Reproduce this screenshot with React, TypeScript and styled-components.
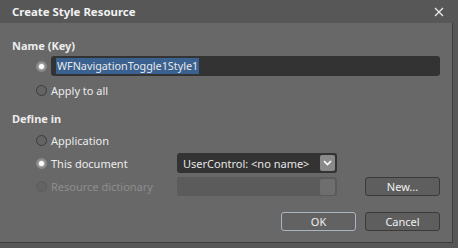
import styled, { createGlobalStyle } from "styled-components";

const GlobalStyle = createGlobalStyle`
  html, body {
    margin: 0;
    padding: 0;
    background: #575757;
  }
  body {
    font-family: "Noto Sans", "Open Sans", sans-serif;
  }
`;

const Window = styled.div`
  width: 458px;
  height: 248px;
  background: #575757;
  display: flex;
  flex-direction: column;
  overflow: hidden;
`;

const TitleBar = styled.div`
  height: 23px;
  display: flex;
  align-items: center;
  justify-content: space-between;
  padding: 0 12px;
  color: #f2f2f2;
  font-size: 11.4px;
  font-weight: 700;
`;

const CloseIcon = styled.svg`
  width: 10px;
  height: 10px;
  margin-right: 2px;
`;

const Body = styled.div`
  width: 453px;
  height: 220px;
  box-sizing: border-box;
  background: #686868;
  border-right: 1px solid #3e3e3e;
  border-bottom: 1px solid #3e3e3e;
  padding: 14px 12px 0 12px;
  display: flex;
  flex-direction: column;
  color: #ececec;
  font-size: 11px;
`;

const GroupLabel = styled.div<{ $top?: number }>`
  font-weight: 700;
  height: 18px;
  line-height: 18px;
  margin-top: ${(p) => p.$top ?? 0}px;
`;

const OptionRow = styled.div<{ $height: number; $top?: number }>`
  display: flex;
  align-items: center;
  height: ${(p) => p.$height}px;
  margin-top: ${(p) => p.$top ?? 0}px;
  padding-left: 24px;
`;

const Radio = styled.span<{ $checked?: boolean; $disabled?: boolean }>`
  position: relative;
  width: 11px;
  height: 11px;
  flex: none;
  box-sizing: border-box;
  border-radius: 50%;
  border: 1px solid ${(p) => (p.$disabled ? "#5c5c5c" : p.$checked ? "#8a8a8a" : "#3c3c3c")};
  background: ${(p) => (p.$checked ? "#7a7a7a" : "#646464")};
  margin-right: 4px;

  &::after {
    content: "";
    display: ${(p) => (p.$checked ? "block" : "none")};
    position: absolute;
    left: 2px;
    top: 2px;
    width: 5px;
    height: 5px;
    border-radius: 50%;
    background: #ffffff;
    box-shadow: 0 0 2px 1px rgba(255, 255, 255, 0.5);
  }
`;

const OptionText = styled.span<{ $disabled?: boolean; $width?: number }>`
  color: ${(p) => (p.$disabled ? "#8d8d8d" : "#ececec")};
  width: ${(p) => (p.$width ? `${p.$width}px` : "auto")};
  flex: none;
  white-space: nowrap;
`;

const KeyInput = styled.div`
  flex: 1;
  height: 20px;
  background: #333333;
  border-radius: 3px;
  display: flex;
  align-items: center;
  padding-left: 5px;
  font-size: 10.8px;
`;

const Selection = styled.span`
  background: #3b6190;
  color: #e8e8e8;
  line-height: 16px;
  padding: 0 1px;
`;

const Combo = styled.div<{ $disabled?: boolean }>`
  width: 160px;
  height: ${(p) => (p.$disabled ? 19 : 20)}px;
  box-sizing: border-box;
  border-radius: 3px;
  background: ${(p) => (p.$disabled ? "#5b5b5b" : "#333333")};
  display: flex;
  align-items: center;
  justify-content: space-between;
  padding: 0 2px 0 6px;
  color: #e6e6e6;
  white-space: nowrap;
  overflow: hidden;
`;

const ComboButton = styled.span<{ $disabled?: boolean }>`
  width: 15px;
  height: 16px;
  flex: none;
  border-radius: 2px;
  background: ${(p) => (p.$disabled ? "#6e6e6e" : "#8a8a8a")};
  display: flex;
  align-items: center;
  justify-content: center;
`;

const Spacer = styled.div`
  flex: 1;
`;

const Button = styled.button<{ $focused?: boolean }>`
  width: 75px;
  height: 19px;
  box-sizing: border-box;
  border-radius: 3px;
  border: 1px solid ${(p) => (p.$focused ? "#a9b6c2" : "#3a3a3a")};
  background: ${(p) => (p.$focused ? "#626262" : "#5e5e5e")};
  color: #f0f0f0;
  font-family: inherit;
  font-size: 11px;
  padding: 0;
  line-height: 17px;
`;

const ButtonBar = styled.div`
  display: flex;
  justify-content: flex-end;
  gap: 9px;
  margin-top: 16px;
`;

export default function App() {
  return (
    <>
      <GlobalStyle />
      <Window>
        <TitleBar>
          <span>Create Style Resource</span>
          <CloseIcon viewBox="0 0 10 10">
            <path d="M1 1L9 9M9 1L1 9" stroke="#e6e6e6" strokeWidth="1.4" />
          </CloseIcon>
        </TitleBar>
        <Body>
          <GroupLabel>Name (Key)</GroupLabel>
          <OptionRow $height={20} $top={1}>
            <Radio $checked />
            <KeyInput>
              <Selection>WFNavigationToggle1Style1</Selection>
            </KeyInput>
          </OptionRow>
          <OptionRow $height={18} $top={5}>
            <Radio />
            <OptionText>Apply to all</OptionText>
          </OptionRow>
          <GroupLabel $top={11}>Define in</GroupLabel>
          <OptionRow $height={18} $top={3}>
            <Radio />
            <OptionText>Application</OptionText>
          </OptionRow>
          <OptionRow $height={20} $top={4}>
            <Radio $checked />
            <OptionText $width={126}>This document</OptionText>
            <Combo>
              <span>UserControl: &lt;no name&gt;</span>
              <ComboButton>
                <svg width="9" height="6" viewBox="0 0 9 6">
                  <path d="M1 1L4.5 4.5L8 1" stroke="#ffffff" strokeWidth="1.6" fill="none" />
                </svg>
              </ComboButton>
            </Combo>
          </OptionRow>
          <OptionRow $height={19} $top={4}>
            <Radio $disabled />
            <OptionText $disabled $width={126}>
              Resource dictionary
            </OptionText>
            <Combo $disabled>
              <span />
              <ComboButton $disabled />
            </Combo>
            <Spacer />
            <Button>New...</Button>
          </OptionRow>
          <ButtonBar>
            <Button $focused>OK</Button>
            <Button>Cancel</Button>
          </ButtonBar>
        </Body>
      </Window>
    </>
  );
}
